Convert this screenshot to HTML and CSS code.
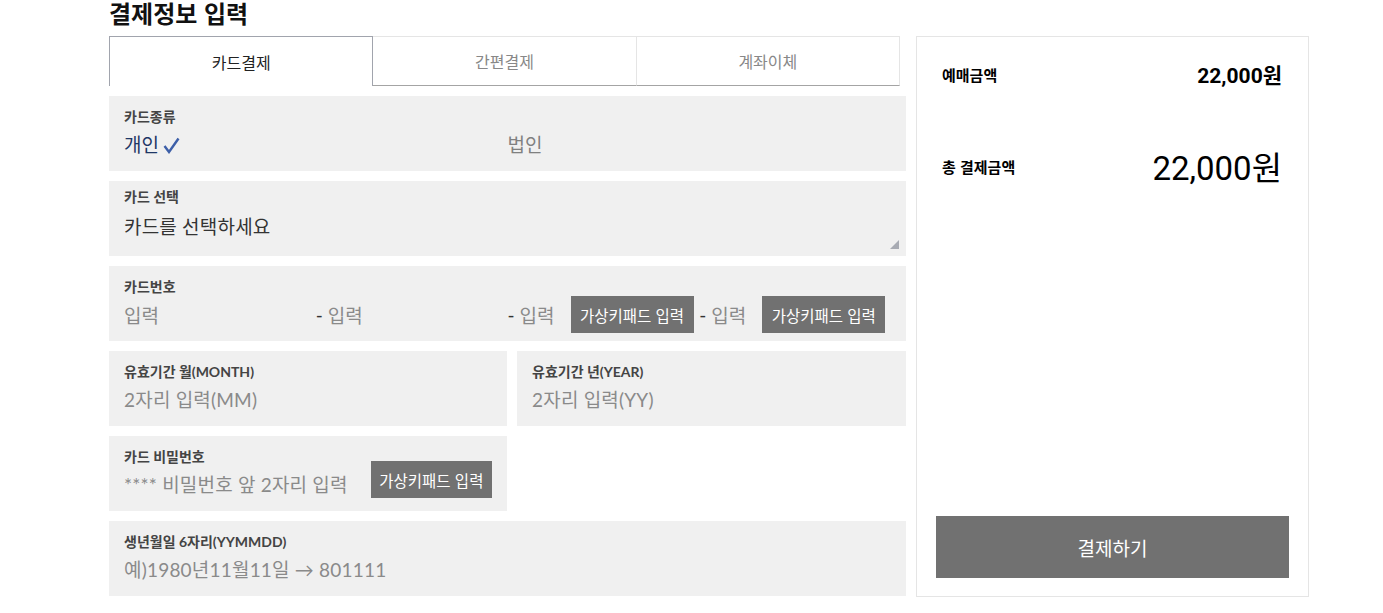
FILE: index.html
```html
<!DOCTYPE html>
<html lang="ko">
<head>
    <meta charset="UTF-8">
    <meta name="viewport" content="width=device-width, initial-scale=1.0">
    <title>결제정보 입력</title>
    <link rel="stylesheet" href="styles.css">
</head>
<body>

    <div class="wrap">
        <h2 class="title">결제정보 입력</h2>

        <div class="payment">
            <div class="left">
                <div class="tabs">
                    <div class="tab active">카드결제</div>
                    <div class="tab">간편결제</div>
                    <div class="tab">계좌이체</div>
                </div>

                <div class="field">
                    <div class="label">카드종류</div>
                    <div class="type-row">
                        <div class="type selected">개인 <svg class="check" width="17" height="17" viewBox="0 0 17 17"><polyline points="1.5,9 6,15 15.5,1.5" fill="none" stroke="#3d5fa8" stroke-width="2.4"/></svg></div>
                        <div class="type">법인</div>
                    </div>
                </div>

                <div class="field select">
                    <div class="label">카드 선택</div>
                    <div class="value dark">카드를 선택하세요</div>
                    <span class="grip"></span>
                </div>

                <div class="field">
                    <div class="label">카드번호</div>
                    <div class="card-num">
                        <div class="num-group"><span class="ph">입력</span></div>
                        <div class="num-group"><span class="dash">-</span><span class="ph">입력</span></div>
                        <div class="num-group"><span class="dash">-</span><span class="ph">입력</span><button class="keypad">가상키패드 입력</button></div>
                        <div class="num-group"><span class="dash">-</span><span class="ph">입력</span><button class="keypad">가상키패드 입력</button></div>
                    </div>
                </div>

                <div class="row">
                    <div class="field half">
                        <div class="label">유효기간 월(MONTH)</div>
                        <div class="value">2자리 입력(MM)</div>
                    </div>
                    <div class="field half">
                        <div class="label">유효기간 년(YEAR)</div>
                        <div class="value">2자리 입력(YY)</div>
                    </div>
                </div>

                <div class="row">
                    <div class="field half">
                        <div class="label">카드 비밀번호</div>
                        <div class="pw-row">
                            <span class="value">**** 비밀번호 앞 2자리 입력</span>
                            <button class="keypad">가상키패드 입력</button>
                        </div>
                    </div>
                </div>

                <div class="field">
                    <div class="label">생년월일 6자리(YYMMDD)</div>
                    <div class="value">예)1980년11월11일 &rarr; 801111</div>
                </div>
            </div>

            <div class="summary">
                <div class="sum-row">
                    <span class="sum-label">예매금액</span>
                    <span class="sum-price">22,000원</span>
                </div>
                <div class="sum-row total">
                    <span class="sum-label">총 결제금액</span>
                    <span class="sum-total">22,000원</span>
                </div>
                <button class="pay-btn">결제하기</button>
            </div>
        </div>
    </div>

</body>
</html>
```

FILE: styles.css
```css
* {
    margin: 0;
    padding: 0;
    box-sizing: border-box;
}

body {
    background: #fff;
    font-family: Lato, "Noto Sans CJK KR", sans-serif;
    color: #333;
}

.wrap {
    padding-left: 109px;
}

.title {
    font-family: "Noto Sans CJK KR", sans-serif;
    font-size: 24px;
    font-weight: bold;
    color: #111;
    line-height: 26px;
    height: 36px;
}

.payment {
    display: flex;
    gap: 10px;
}

.left {
    width: 797px;
    display: flex;
    flex-direction: column;
    gap: 10px;
}

.tabs {
    display: flex;
    width: 791px;
    height: 50px;
}

.tab {
    flex: 1;
    display: flex;
    align-items: center;
    justify-content: center;
    font-family: "Noto Sans CJK KR", sans-serif;
    font-size: 16px;
    color: #888;
    border-top: 1px solid #e5e5e5;
    border-right: 1px solid #e5e5e5;
    border-bottom: 1px solid #a4a4a4;
}

.tab.active {
    color: #222;
    border: 1px solid #a1a4ad;
    border-bottom: none;
}

.row {
    display: flex;
    gap: 10px;
}

.field {
    position: relative;
    background: #f0f0f0;
    height: 75px;
    padding: 12px 15px 0 15px;
}

.half {
    width: 398px;
}

.row .half + .half {
    width: 389px;
}

.label {
    font-size: 14px;
    font-weight: bold;
    color: #444;
    line-height: 18px;
    height: 21px;
}

.value {
    font-size: 19px;
    color: #8a8a8a;
    line-height: 26px;
    margin-top: 3px;
    letter-spacing: 0.2px;
}

.value.dark {
    color: #333;
}

.select {
    padding-top: 7px;
}

.select .value {
    margin-top: 5px;
}

.type-row {
    display: flex;
    margin-top: 3px;
}

.type {
    width: 384px;
    display: flex;
    align-items: center;
    gap: 4px;
    font-size: 19px;
    line-height: 26px;
    color: #808080;
}

.type.selected {
    color: #1f3766;
}

.grip {
    position: absolute;
    right: 7px;
    bottom: 7px;
    width: 0;
    height: 0;
    border-left: 9px solid transparent;
    border-bottom: 9px solid #a8abb3;
}

.card-num {
    display: flex;
    margin-top: -3px;
}

.num-group {
    width: 192px;
    display: flex;
    align-items: center;
    height: 37px;
    font-size: 19px;
}

.dash {
    color: #333;
    width: 12px;
}

.ph {
    color: #8a8a8a;
    width: 51px;
}

.keypad {
    background: #717171;
    color: #fff;
    border: none;
    height: 37px;
    width: 123px;
    font-family: "Noto Sans CJK KR", sans-serif;
    font-size: 15.5px;
    cursor: pointer;
}

.pw-row {
    display: flex;
    align-items: flex-start;
    margin-top: -8px;
}

.pw-row .value {
    width: 248px;
    margin-top: 11px;
}

.pw-row .keypad {
    margin-left: 2px;
}

.summary {
    width: 393px;
    height: 561px;
    border: 1px solid #e5e5e5;
    padding: 0 19px 18px 19px;
    display: flex;
    flex-direction: column;
    font-family: Roboto, "Noto Sans CJK KR", sans-serif;
    color: #000;
}

.sum-row {
    display: flex;
    justify-content: space-between;
    align-items: center;
    padding: 0 7px 0 6px;
    height: 28px;
    margin-top: 23px;
}

.sum-row.total {
    margin-top: 58px;
    height: 40px;
}

.sum-label {
    font-family: "Noto Sans CJK KR", sans-serif;
    font-size: 15px;
    font-weight: bold;
}

.sum-price {
    font-size: 21px;
    font-weight: bold;
}

.sum-total {
    font-size: 33px;
}

.pay-btn {
    margin-top: auto;
    height: 62px;
    background: #717171;
    color: #fff;
    border: none;
    font-family: "Noto Sans CJK KR", sans-serif;
    font-size: 19px;
    cursor: pointer;
}
```
